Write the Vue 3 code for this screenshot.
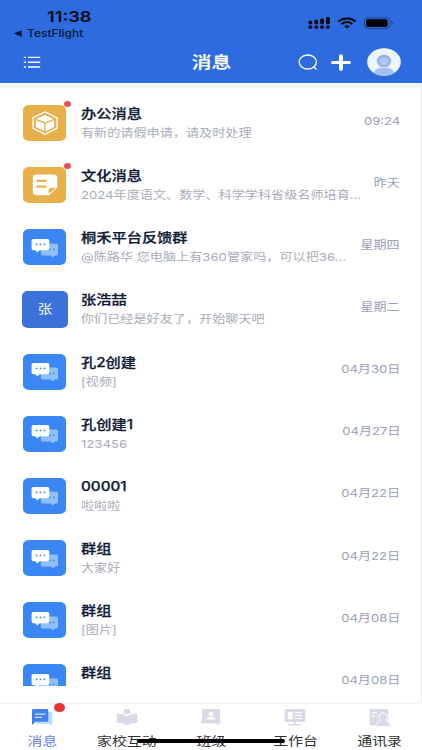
<script setup>
import { ref } from 'vue'

// --- STATE ---
const activeTab = ref('msg')

const chats = ref([
  { id: 1, type: 'office', title: '办公消息', text: '有新的请假申请，请及时处理', time: '09:24', unread: true },
  { id: 2, type: 'culture', title: '文化消息', text: '2024年度语文、数学、科学学科省级名师培育...', time: '昨天', unread: true },
  { id: 3, type: 'group', title: '桐禾平台反馈群', text: '@陈路华 您电脑上有360管家吗，可以把36...', time: '星期四' },
  { id: 4, type: 'user', title: '张浩喆', text: '你们已经是好友了，开始聊天吧', time: '星期二' },
  { id: 5, type: 'group', title: '孔2创建', text: '[视频]', time: '04月30日' },
  { id: 6, type: 'group', title: '孔创建1', text: '123456', time: '04月27日' },
  { id: 7, type: 'group', title: '00001', text: '啦啦啦', time: '04月22日' },
  { id: 8, type: 'group', title: '群组', text: '大家好', time: '04月22日' },
  { id: 9, type: 'group', title: '群组', text: '[图片]', time: '04月08日' },
  { id: 10, type: 'group', title: '群组', text: '', time: '04月08日' }
])

const tabs = [
  { key: 'msg', label: '消息', badge: true },
  { key: 'home', label: '家校互动' },
  { key: 'class', label: '班级' },
  { key: 'work', label: '工作台' },
  { key: 'contacts', label: '通讯录' }
]
</script>

<template>
  <div class="page">
    <header class="header">
      <div class="status-bar">
        <div class="status-left">
          <span class="clock wide">11:38</span>
          <div class="back-app">
            <svg width="8" height="7" viewBox="0 0 8 7"><path d="M0 3.5 7.6 0.3V6.7Z" fill="#071633" /></svg>
            <span class="wide">TestFlight</span>
          </div>
        </div>
        <svg class="status-icons" width="86" height="14" viewBox="0 0 86 14">
          <g fill="#050a14">
            <rect x="0.5" y="4.8" width="3.8" height="3.4" rx="1.2" />
            <rect x="6.4" y="3.8" width="3.8" height="4.4" rx="1.2" />
            <rect x="12.2" y="2.4" width="3.8" height="5.8" rx="1.2" />
            <rect x="18" y="1" width="3.8" height="7.2" rx="1.2" />
            <rect x="0.5" y="9.6" width="3.8" height="3.2" rx="1.2" />
            <rect x="6.4" y="9.6" width="3.8" height="3.2" rx="1.2" />
            <rect x="12.2" y="9.6" width="3.8" height="3.2" rx="1.2" />
            <rect x="18" y="9.6" width="3.8" height="3.2" rx="1.2" />
          </g>
          <g fill="none" stroke="#050a14" stroke-width="2">
            <path d="M30.4 5.6C35 1.4 43 1.4 47.6 5.6" />
            <path d="M33.5 8.2C36.7 5.4 41.3 5.4 44.5 8.2" />
          </g>
          <path d="M36 10.2C37.6 8.8 40.4 8.8 42 10.2L39 12.6Z" fill="#050a14" />
          <rect x="56.4" y="1.8" width="25.8" height="10.8" rx="3.2" fill="none" stroke="#1d4391" stroke-width="1" />
          <rect x="58" y="3.3" width="21.6" height="7.8" rx="1.8" fill="#000" />
          <path d="M83.6 5.2C85.2 5.8 85.2 8.6 83.6 9.2Z" fill="#1d4391" />
        </svg>
      </div>
      <div class="nav-bar">
        <div class="nav-side">
          <svg width="18" height="14" viewBox="0 0 18 14">
            <g stroke="#fff" stroke-width="1.4">
              <path d="M0.8 2.4H3M0.8 7.2H3M0.8 12H3M5 2.4H17.2M5 7.2H17.2M5 12H17.2" />
            </g>
          </svg>
        </div>
        <h1 class="wide-center">消息</h1>
        <div class="nav-side nav-actions">
          <svg width="20" height="18" viewBox="0 0 20 18" fill="none" stroke="#fff" stroke-width="1.3">
            <ellipse cx="9.8" cy="9" rx="8.6" ry="7" />
            <path d="M15.2 13.6 18.6 16.4" />
          </svg>
          <svg width="20" height="17" viewBox="0 0 20 17" stroke="#fff" stroke-linecap="round">
            <path d="M1.7 8.5H18.3" stroke-width="3.2" />
            <path d="M10 2.1V14.9" stroke-width="3.9" />
          </svg>
          <svg class="avatar" width="34" height="28" viewBox="0 0 34 28">
            <defs>
              <clipPath id="face"><ellipse cx="17" cy="14" rx="16.8" ry="13.7" /></clipPath>
            </defs>
            <ellipse cx="17" cy="14" rx="16.8" ry="13.7" fill="#eef5fe" />
            <g clip-path="url(#face)">
              <path d="M6.5 28C6.5 21.5 10 19.8 17 19.8S27.5 21.5 27.5 28Z" fill="#a5c1f1" />
              <ellipse cx="17" cy="13" rx="7.2" ry="6.3" fill="#94b4ec" />
              <ellipse cx="17" cy="13.4" rx="4.8" ry="4" fill="#a9c6f5" />
              <path d="M14.9 14.4Q17 16.6 19.1 14.4Z" fill="#dfeafd" />
            </g>
          </svg>
        </div>
      </div>
    </header>

    <main class="content">
      <div class="chat-list">
        <div v-for="chat in chats" :key="chat.id" class="chat-row">
          <div class="chat-icon" :class="chat.type">
            <svg v-if="chat.type === 'office'" width="28" height="26" viewBox="0 0 28 26" fill="none" stroke="#fff">
              <path d="M14 1.8 26 7.7V18.3L14 24.2 2 18.3V7.7Z" stroke-width="1.4" />
              <path d="M14 5 22.7 8.9 14 12.2 5.3 8.9ZM4.8 10.2 13.3 13.6V21.2L4.8 17ZM23.2 10.2 14.7 13.6V21.2L23.2 17Z" fill="#fff" stroke="none" />
            </svg>
            <svg v-else-if="chat.type === 'culture'" width="26" height="22" viewBox="0 0 26 22">
              <path d="M4.5 0.6H21.6Q25.3 0.6 25.3 4V13.6L17 21.2H4.5Q0.8 21.2 0.8 17.8V4Q0.8 0.6 4.5 0.6Z" fill="#fff" />
              <path d="M16.6 20V16.2Q16.6 14 19 14H23.8Z" fill="#e7b04a" />
              <path d="M5.4 6.8H13.6M5.4 12.6H13.6" stroke="#e7b04a" stroke-width="2.3" stroke-linecap="round" />
            </svg>
            <svg v-else-if="chat.type === 'group'" width="28" height="20" viewBox="0 0 28 20">
              <path d="M11.5 5.6H25.3Q27 5.6 27 7.2V16Q27 17.4 25.3 17.4H23.6L21.7 19.4 19.6 17.4H11.5Q9.8 17.4 9.8 16V7.2Q9.8 5.6 11.5 5.6Z" fill="#8fc0fb" />
              <g fill="#3b86f5"><circle cx="18.9" cy="11.4" r="0.9" /><circle cx="22.6" cy="11.4" r="0.9" /></g>
              <path d="M2.3 1H16.5Q18.3 1 18.3 2.6V10.6Q18.3 12.2 16.5 12.2H8.7L6.2 14.6 4.4 12.2H2.3Q0.6 12.2 0.6 10.6V2.6Q0.6 1 2.3 1Z" fill="#fff" />
              <g fill="#3b86f5"><circle cx="5.6" cy="6.4" r="0.9" /><circle cx="9.5" cy="6.4" r="0.9" /><circle cx="13.4" cy="6.4" r="0.9" /></g>
            </svg>
            <span v-else class="wide-center">张</span>
            <i v-if="chat.unread" class="dot"></i>
          </div>
          <div class="chat-body">
            <div class="chat-title wide">{{ chat.title }}</div>
            <div class="chat-text wide">{{ chat.text }}</div>
          </div>
          <div class="chat-time">{{ chat.time }}</div>
        </div>
      </div>
    </main>

    <nav class="tab-bar">
      <div
        v-for="tab in tabs"
        :key="tab.key"
        class="tab"
        :class="{ active: activeTab === tab.key }"
        @click="activeTab = tab.key"
      >
        <div class="tab-icon">
          <svg v-if="tab.key === 'msg'" width="22" height="18" viewBox="0 0 22 18">
            <path d="M7 4H21.2V17.4L18.4 15.8H5Z" fill="#b9dcfd" />
            <path d="M2.5 1H15.8Q17.3 1 17.3 2.4V12.4Q17.3 13.8 15.8 13.8H4.8L1 17V2.4Q1 1 2.5 1Z" fill="#4180ee" />
            <path d="M4 6.2H14.4M4 9.4H11" stroke="#cfe5ff" stroke-width="1.2" />
          </svg>
          <svg v-else-if="tab.key === 'home'" width="22" height="18" viewBox="0 0 22 18" fill="#d8dbe7">
            <ellipse cx="11" cy="3.5" rx="3.2" ry="2.7" />
            <path d="M0.7 5.8Q7 5 11 8.6Q15 5 21.3 5.8V14.8Q15 14.6 11 17.4Q7 14.6 0.7 14.8Z" />
          </svg>
          <svg v-else-if="tab.key === 'class'" width="22" height="18" viewBox="0 0 22 18">
            <path d="M3.5 1H18.5Q20 1 20 2.4V13H21V15.2H18.4V17.4L15 15.2H1V13H2V2.4Q2 1 3.5 1Z" fill="#d8dbe7" />
            <ellipse cx="11" cy="6" rx="2.4" ry="2.2" fill="#fff" />
            <path d="M6.4 11.6Q7 8.8 11 8.8T15.6 11.6Z" fill="#fff" />
          </svg>
          <svg v-else-if="tab.key === 'work'" width="22" height="18" viewBox="0 0 22 18">
            <path d="M2 1H20Q21.3 1 21.3 2.2V12.8Q21.3 14 20 14H12V16H17V17.5H4V16H10V14H2Q0.7 14 0.7 12.8V2.2Q0.7 1 2 1Z" fill="#d8dbe7" />
            <path d="M3.8 3.8H8.7V11.2H3.8Z" fill="#fff" />
            <path d="M11 4.7H18M11 7.6H18M11 10.5H18" stroke="#fff" stroke-width="1.2" />
          </svg>
          <svg v-else width="22" height="18" viewBox="0 0 22 18">
            <path d="M2 1H18Q19.3 1 19.3 2.2V17.4H2Q0.7 17.4 0.7 16.2V2.2Q0.7 1 2 1Z" fill="#d8dbe7" />
            <path d="M2.4 4.8H8M2.4 8.2H6" stroke="#fff" stroke-width="1.2" />
            <path d="M7.4 17.6Q8 13.4 11.4 12.6Q8.4 9.4 10.6 6.4Q14 3.4 17.4 6.4Q19.6 9.4 16.8 12.6Q20.4 13.4 21.2 17.6Z" fill="#d8dbe7" stroke="#fff" stroke-width="0.9" />
            <path d="M7 17.3H21.4" stroke="#d8dbe7" stroke-width="1.3" />
          </svg>
          <i v-if="tab.badge" class="tab-badge"></i>
        </div>
        <span class="tab-label wide-center">{{ tab.label }}</span>
      </div>
      <div class="home-indicator"></div>
    </nav>
  </div>
</template>

<style>
body {
  margin: 0;
  overflow: hidden;
}
</style>

<style scoped>
.page {
  display: flex;
  flex-direction: column;
  width: 422px;
  height: 750px;
  overflow: hidden;
  background-color: #fff;
  font-family: Inter, "Noto Sans CJK SC", sans-serif;
}

.wide {
  transform: scaleX(1.2);
  transform-origin: left center;
  white-space: nowrap;
}

.wide-center {
  transform: scaleX(1.2);
  white-space: nowrap;
}

/* --- Header --- */
.header {
  flex: none;
  height: 83px;
  background-color: #2d6bdf;
}

.status-bar {
  display: flex;
  justify-content: space-between;
  box-sizing: border-box;
  height: 41px;
  padding: 7px 28px 0 14px;
}

.status-left {
  display: flex;
  flex-direction: column;
  color: #071633;
}

.clock {
  margin-left: 32.5px;
  font-size: 15.2px;
  line-height: 19px;
  font-weight: 600;
  color: #050a14;
}

.back-app {
  display: flex;
  align-items: center;
  gap: 5px;
  height: 14px;
  font-size: 10px;
  line-height: 14px;
  font-weight: 500;
}

.status-icons {
  margin-top: 9px;
}

.nav-bar {
  display: flex;
  align-items: center;
  height: 42px;
  padding: 0 21px 0 23px;
}

.nav-side {
  display: flex;
  align-items: center;
  width: 170px;
}

.nav-bar h1 {
  flex: 1;
  margin: 0 1px 0 0;
  text-align: center;
  font-size: 16.4px;
  line-height: 24px;
  font-weight: 500;
  color: #fff;
  -webkit-text-stroke: 0.25px #fff;
}

.nav-actions {
  justify-content: flex-end;
}

.nav-actions .avatar {
  margin-left: 16px;
}

.nav-actions svg:nth-child(2) {
  margin-left: 13px;
}

/* --- Chat list --- */
.content {
  flex: none;
  box-sizing: border-box;
  height: 619px;
  padding-top: 9px;
  border-right: 1px solid #e9ebf1;
  background: linear-gradient(#f2f7fc 0 5px, #fff 6px);
}

.chat-list {
  height: 594px;
  overflow: hidden;
}

.chat-row {
  display: flex;
  align-items: center;
  box-sizing: border-box;
  height: 62.15px;
  padding: 0 21px 0 23px;
}

.chat-icon {
  position: relative;
  display: flex;
  flex: none;
  align-items: center;
  justify-content: center;
  width: 43px;
  height: 36px;
  border-radius: 6px / 5px;
}

.chat-icon.office,
.chat-icon.culture {
  background-color: #e7b04a;
}

.chat-icon.group {
  background-color: #3b86f5;
}

.chat-icon.user {
  width: 45.5px;
  height: 37.5px;
  margin: 0 -1.5px 0 -1px;
  background-color: #3b71d8;
  color: #fff;
  font-size: 12.2px;
}

.chat-icon.group svg {
  margin-top: 1px;
}

.dot {
  position: absolute;
  top: -4px;
  right: -5px;
  width: 7px;
  height: 6px;
  border-radius: 50%;
  background-color: #e55353;
}

.chat-body {
  flex: 1;
  min-width: 0;
  padding-left: 14.5px;
}

.chat-title {
  height: 20px;
  font-size: 12.7px;
  line-height: 20px;
  font-weight: 500;
  color: #0f1a36;
  -webkit-text-stroke: 0.25px #0f1a36;
}

.chat-text {
  height: 18px;
  font-size: 10.95px;
  line-height: 18px;
  color: #a9adb8;
}

.chat-time {
  flex: none;
  margin-top: -5px;
  font-size: 10.9px;
  line-height: 16px;
  color: #969fb8;
  transform: scaleX(1.2);
  transform-origin: right center;
  white-space: nowrap;
}

/* --- Tab bar --- */
.tab-bar {
  position: relative;
  display: flex;
  flex: none;
  box-sizing: border-box;
  height: 48px;
  border-top: 2px solid #f4f5f9;
}

.tab {
  display: flex;
  flex: 1;
  flex-direction: column;
  align-items: center;
  padding-top: 4px;
}

.tab-icon {
  position: relative;
  height: 18px;
}

.tab-icon svg {
  display: block;
}

.tab-badge {
  position: absolute;
  top: -5px;
  right: -12px;
  width: 11px;
  height: 9px;
  border-radius: 50%;
  background-color: #e6352b;
}

.tab-label {
  margin-top: 7px;
  font-size: 12.4px;
  line-height: 18px;
  color: #333;
}

.tab.active .tab-label {
  color: #6484df;
}

.home-indicator {
  position: absolute;
  left: 137px;
  bottom: 7px;
  width: 148px;
  height: 4.5px;
  border-radius: 3px;
  background-color: #000;
}
</style>
